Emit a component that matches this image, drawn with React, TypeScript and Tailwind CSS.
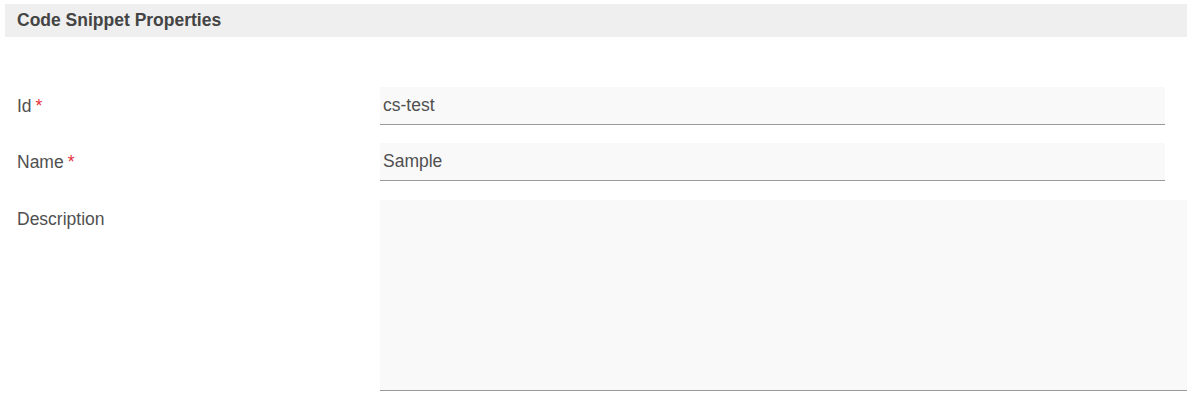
import React from 'react'

const fields = [
  { label: 'Id', required: true, value: 'cs-test' },
  { label: 'Name', required: true, value: 'Sample' },
]

export default function App() {
  return (
    <div className="w-[1187px] h-[406px] bg-white pt-1 pl-[5px] font-['Liberation_Sans',Arial,sans-serif] text-[#505050]">
      {/* Section header */}
      <div className="h-[33px] bg-[#efefef] pl-3 flex items-center">
        <h2 className="text-[17.5px] font-bold text-[#444]">Code Snippet Properties</h2>
      </div>

      <div className="pt-[50px] pl-3 flex flex-col gap-[18px]">
        {fields.map((f) => (
          <div key={f.label} className="flex">
            <div className="w-[363px] h-[38px] flex items-center text-[17.5px]">
              {f.label}
              {f.required && <span className="text-[#e8313a] ml-1">*</span>}
            </div>
            <div className="w-[785px] h-[38px] bg-[#f9f9f9] border-b border-[#9a9a9a] flex items-center px-[3px] text-[17.5px] text-[#505050]">
              {f.value}
            </div>
          </div>
        ))}

        <div className="flex mt-px">
          <div className="w-[363px] h-[38px] flex items-center text-[17.5px]">Description</div>
          <div className="flex-1 h-[191px] bg-[#f9f9f9] border-b border-[#9a9a9a]" />
        </div>
      </div>
    </div>
  )
}
